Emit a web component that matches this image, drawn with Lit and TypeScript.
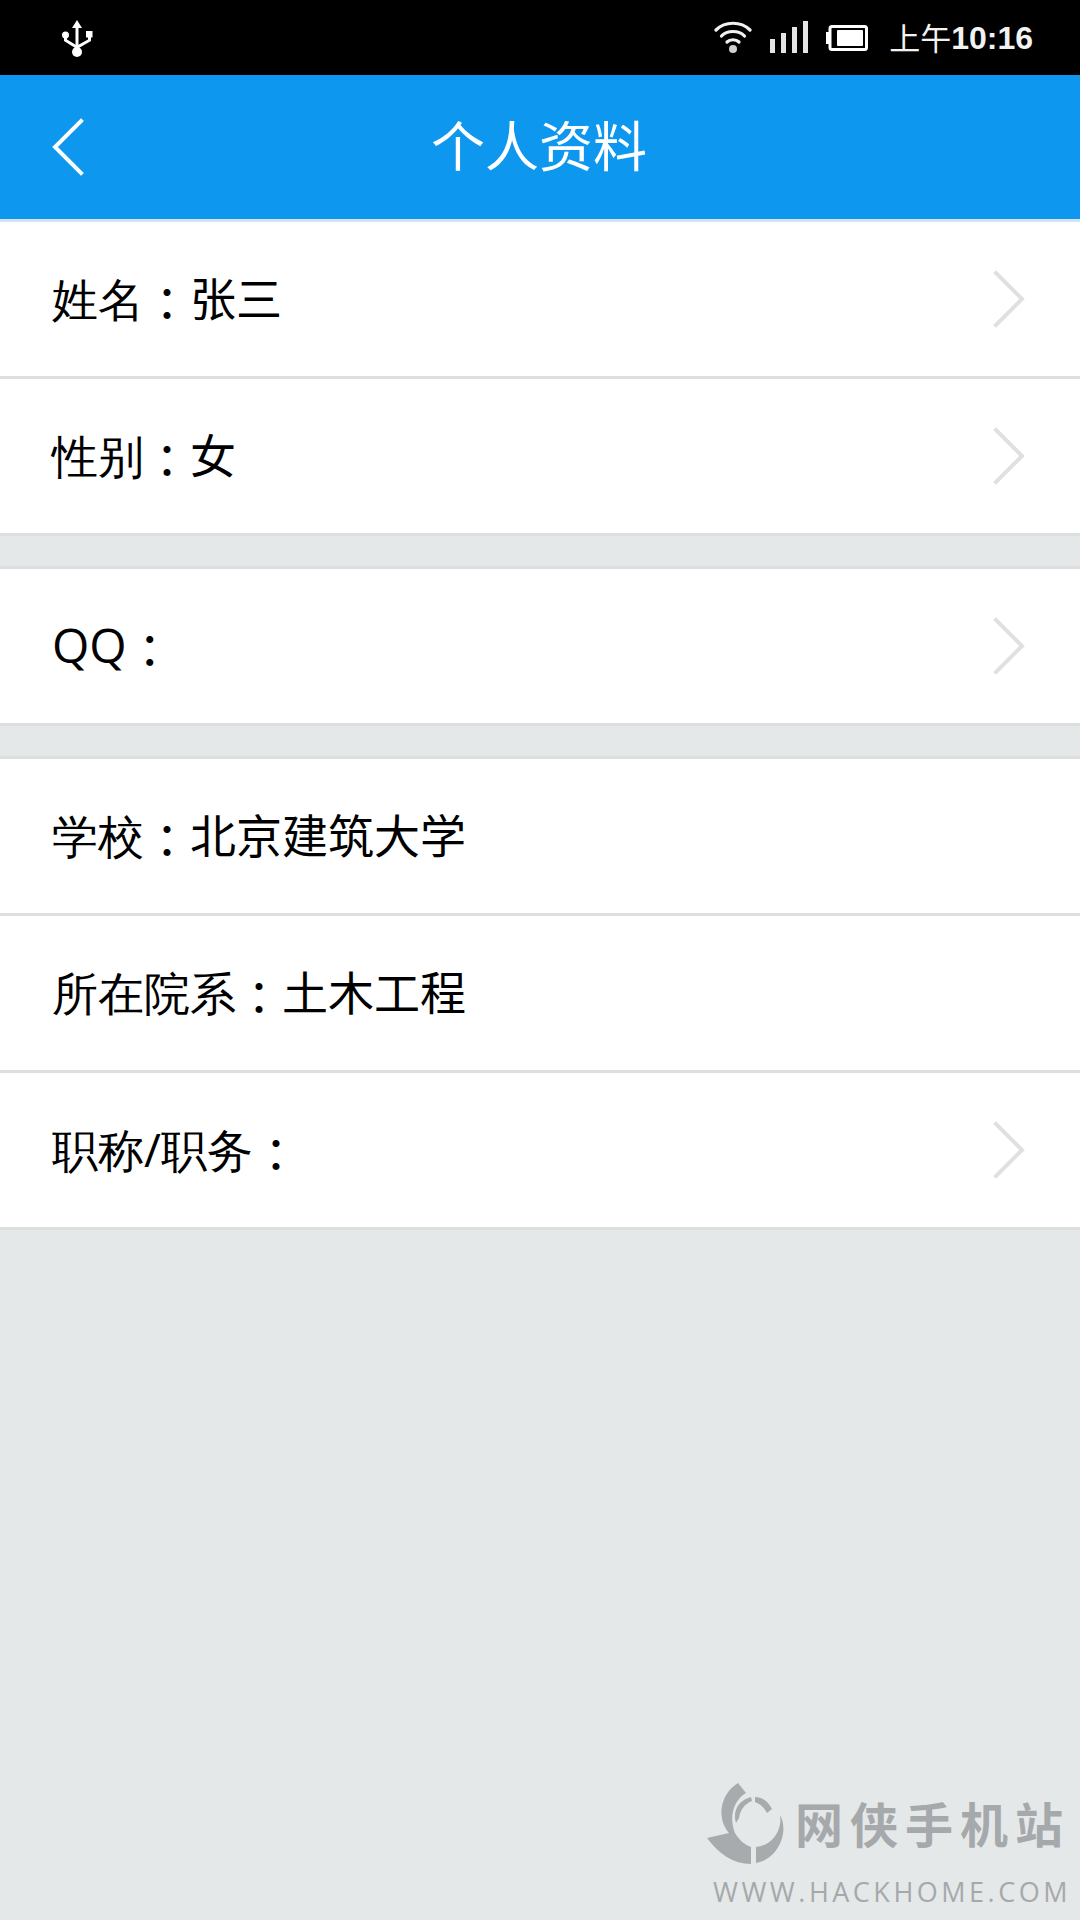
import { LitElement, html, css, svg } from "lit";
import { customElement } from "lit/decorators.js";

type Row = { label: string; value: string; arrow: boolean };
const groups: Row[][] = [
  [
    { label: "姓名", value: "张三", arrow: true },
    { label: "性别", value: "女", arrow: true },
  ],
  [{ label: "QQ", value: "", arrow: true }],
  [
    { label: "学校", value: "北京建筑大学", arrow: false },
    { label: "所在院系", value: "土木工程", arrow: false },
    { label: "职称/职务", value: "", arrow: true },
  ],
];

@customElement("app-root")
export class AppRoot extends LitElement {
  static styles = css`
    :host {
      display: block;
      position: relative;
      width: 1080px;
      height: 1920px;
      overflow: hidden;
      background: #e5e8e9;
      font-family: "Noto Sans", "Noto Sans CJK SC", sans-serif;
      color: #000;
    }
    .status {
      height: 75px;
      background: #000;
      display: flex;
      align-items: center;
      color: #fff;
      padding: 0 47px 0 61px;
    }
    .usb { width: 32px; height: 38px; margin-top: 2px; }
    .spacer { flex: 1; }
    .wifi { width: 38px; height: 34px; margin-right: 18px; margin-top: -2px; }
    .signal { width: 38px; height: 32px; margin-right: 18px; margin-top: -2px; }
    .battery { width: 42px; height: 26px; margin-right: 21px; }
    .clock {
      font-size: 31px;
      line-height: 34px;
      white-space: nowrap;
      display: flex;
      align-items: center;
      color: #f2f2f2;
    }
    .clock b {
      font-family: "Liberation Sans", sans-serif;
      font-size: 32px;
      font-weight: 700;
    }
    .bar {
      height: 144px;
      background: #0e97ef;
      border-bottom: 3px solid #d2e3ee;
      display: flex;
      align-items: center;
      justify-content: center;
      position: relative;
      color: #fff;
      font-size: 54px;
    }
    .title { line-height: 60px; margin-left: -2px; margin-top: -3px; }
    .back { position: absolute; left: 52px; top: 43px; width: 34px; height: 60px; }
    .group { margin-bottom: 30px; }
    .group + .group { border-top: 3px solid #dcdedf; }
    .row {
      height: 154px;
      background: #fff;
      border-bottom: 3px solid #dcdedf;
      display: flex;
      align-items: center;
      justify-content: space-between;
      padding: 0 53px 0 52px;
      font-size: 46px;
    }
    .text { display: block; margin-top: -2px; line-height: 60px; white-space: nowrap; }
    .latin { font-family: "Open Sans", sans-serif; }
    .wide { font-size: 48px; }
    .colon {
      font-family: "Noto Sans CJK TC", sans-serif;
      line-height: 0;
      vertical-align: -5px;
    }
    .chev { width: 34px; height: 60px; margin-right: 2px; }
    .mark {
      position: absolute;
      left: 705px;
      top: 1778px;
      width: 370px;
      color: #a6a9ab;
    }
    .logo { position: absolute; left: 2px; top: 5px; width: 80px; height: 84px; }
    .cn {
      position: absolute;
      left: 90px;
      top: 18px;
      font-family: "Noto Sans CJK SC", sans-serif;
      font-size: 48px;
      line-height: 52px;
      font-weight: 700;
      letter-spacing: 7px;
      white-space: nowrap;
    }
    .url {
      position: absolute;
      left: 8px;
      top: 98px;
      font-family: "Open Sans", sans-serif;
      font-size: 27px;
      line-height: 32px;
      letter-spacing: 3.5px;
      white-space: nowrap;
    }
  `;

  render() {
    return html`
      <div class="status">
        <svg class="usb" viewBox="0 0 32 38" fill="#fff">
          <path d="M16 0l5 8h-3.500v20h-3V8H11z" />
          <circle cx="16" cy="32" r="5" />
          <circle cx="4.500" cy="15" r="3.500" />
          <rect x="25" y="11" width="6.500" height="6.500" />
          <path d="M3 16h3v3.500l9 5.500v3.500L3 21zM27 16h3v5l-13 7.500v-3.500l10-5.500z" />
        </svg>
        <div class="spacer"></div>
        <svg class="wifi" viewBox="0 0 38 34" fill="none" stroke="#f0f0f0" stroke-width="3.200" stroke-linecap="round">
          <path d="M2 10C11 1 27 1 36 10" />
          <path d="M7.500 16C13 10 25 10 30.500 16" />
          <path d="M13 22c3-3 9-3 12 0" />
          <circle cx="19" cy="29" r="4" fill="#d0d0d0" stroke="none" />
        </svg>
        <svg class="signal" viewBox="0 0 38 32" fill="#e4e4e4">
          <rect x="0" y="18" width="5" height="14" />
          <rect x="11" y="12" width="5" height="20" />
          <rect x="22" y="6" width="5" height="26" />
          <rect x="33" y="0" width="5" height="32" />
        </svg>
        <svg class="battery" viewBox="0 0 42 26">
          <path d="M0 7h3v12H0z" fill="#fff" />
          <rect x="4" y="1.500" width="36.500" height="23" rx="2" fill="none" stroke="#fff" stroke-width="3" />
          <rect x="11" y="5" width="26" height="16" rx="1" fill="#fff" />
        </svg>
        <div class="clock">上午<b>10:16</b></div>
      </div>
      <div class="bar">
        <svg class="back" viewBox="0 0 34 60" fill="none" stroke="#fff" stroke-width="4" stroke-linecap="square">
          <path d="M29 3L3 29l26 26" />
        </svg>
        <div class="title">个人资料</div>
      </div>
      ${groups.map(
        (g) => html`<div class="group">
          ${g.map(
            (r) => html`<div class="row">
              <span class="text"><span class="latin ${r.label === "QQ" ? "wide" : ""}">${r.label}</span><span class="colon">：</span>${r.value}</span>
              ${r.arrow
                ? html`<svg class="chev" viewBox="0 0 34 60" fill="none" stroke="#e0e0e0" stroke-width="4" stroke-linecap="square">
                    <path d="M5 4l26 26L5 56" />
                  </svg>`
                : ""}
            </div>`
          )}
        </div>`
      )}
      <div class="mark">
        <svg class="logo" viewBox="0 0 80 84">
          ${svg`
            <path d="M31 0l8 10C26 18 22 34 28 50c4 7 10 12 16 14v17c-18 0-32-10-44-26l22-5C10 36 12 12 31 0z" fill="#a8abad" />
            <path d="M29 40C25 28 32 17 44 14l1 4c-8 3-12 10-13 17zM48 14c7 0 13 4 17 12l-5 4c-3-6-7-9-12-11z" fill="#a8abad" />
            <path d="M49 80V64c10-1 18-7 22-16 2-5 3-10 2-16 3 5 4 12 3 19-3 16-14 27-27 29z" fill="#a8abad" />
          `}
        </svg>
        <div class="cn">网侠手机站</div>
        <div class="url">WWW.HACKHOME.COM</div>
      </div>
    `;
  }
}
